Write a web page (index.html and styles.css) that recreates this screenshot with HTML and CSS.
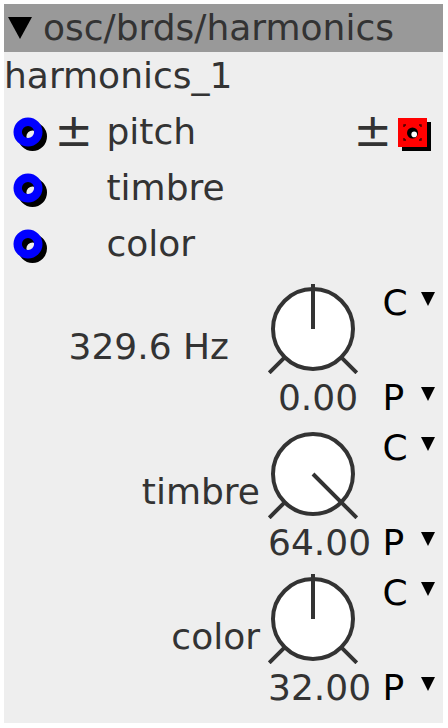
FILE: index.html
```html
<!DOCTYPE html>
<html lang="en">
<head>
    <meta charset="UTF-8">
    <meta name="viewport" content="width=device-width, initial-scale=1.0">
    <title>osc/brds/harmonics</title>
    <link rel="stylesheet" href="styles.css">
</head>
<body>
    <div class="panel">
        <div class="head"><span class="tri"></span>osc/brds/harmonics</div>
        <div class="inst">harmonics_1</div>

        <div class="port-row">
            <svg class="port" width="36" height="40" viewBox="0 0 36 40">
                <circle cx="20.5" cy="24.5" r="10.3" fill="none" stroke="#000" stroke-width="8.4"/>
                <circle cx="16" cy="20" r="10.3" fill="none" stroke="#00f" stroke-width="8.4"/>
            </svg>
            <span class="pm">±</span>
            <span class="name">pitch</span>
            <span class="pm pm-right">±</span>
            <svg class="jack" width="34" height="34" viewBox="0 0 34 34">
                <rect x="4" y="4" width="29" height="29" fill="#000"/>
                <rect x="0" y="0" width="29" height="29" fill="#f00"/>
                <path d="M6 9V7h2M21 7h2v2M6 20v2h2M21 22h2v-2" fill="none" stroke="#400" stroke-width="1.4"/>
                <circle cx="14.5" cy="15" r="5.5" fill="#000"/>
                <circle cx="16.2" cy="16.4" r="2.8" fill="#fff"/>
            </svg>
        </div>
        <div class="port-row">
            <svg class="port" width="36" height="40" viewBox="0 0 36 40">
                <circle cx="20.5" cy="24.5" r="10.3" fill="none" stroke="#000" stroke-width="8.4"/>
                <circle cx="16" cy="20" r="10.3" fill="none" stroke="#00f" stroke-width="8.4"/>
            </svg>
            <span class="pm"></span>
            <span class="name">timbre</span>
        </div>
        <div class="port-row">
            <svg class="port" width="36" height="40" viewBox="0 0 36 40">
                <circle cx="20.5" cy="24.5" r="10.3" fill="none" stroke="#000" stroke-width="8.4"/>
                <circle cx="16" cy="20" r="10.3" fill="none" stroke="#00f" stroke-width="8.4"/>
            </svg>
            <span class="pm"></span>
            <span class="name">color</span>
        </div>

        <div class="knobs">
            <div class="knob-row">
                <div class="knob-label hz">329.6 Hz</div>
                <div class="knob-col">
                    <svg class="knob" width="90" height="90" viewBox="0 0 90 90">
                        <circle cx="45" cy="45" r="40" fill="#fff" stroke="#333" stroke-width="4"/>
                        <path d="M16.7 73.3L1.2 88.8M73.3 73.3L88.8 88.8M45 45V0" stroke="#333" stroke-width="4"/>
                    </svg>
                    <div class="knob-val">0.00</div>
                </div>
                <div class="cp">
                    <div class="cp-item c"><span class="letter">C</span><span class="dd"></span></div>
                    <div class="cp-item p"><span class="letter">P</span><span class="dd"></span></div>
                </div>
            </div>

            <div class="knob-row">
                <div class="knob-label">timbre</div>
                <div class="knob-col">
                    <svg class="knob" width="90" height="90" viewBox="0 0 90 90">
                        <circle cx="45" cy="45" r="40" fill="#fff" stroke="#333" stroke-width="4"/>
                        <path d="M16.7 73.3L1.2 88.8M73.3 73.3L88.8 88.8M45 45L76.8 76.8" stroke="#333" stroke-width="4"/>
                    </svg>
                    <div class="knob-val">64.00</div>
                </div>
                <div class="cp">
                    <div class="cp-item c"><span class="letter">C</span><span class="dd"></span></div>
                    <div class="cp-item p"><span class="letter">P</span><span class="dd"></span></div>
                </div>
            </div>

            <div class="knob-row">
                <div class="knob-label">color</div>
                <div class="knob-col">
                    <svg class="knob" width="90" height="90" viewBox="0 0 90 90">
                        <circle cx="45" cy="45" r="40" fill="#fff" stroke="#333" stroke-width="4"/>
                        <path d="M16.7 73.3L1.2 88.8M73.3 73.3L88.8 88.8M45 45V0" stroke="#333" stroke-width="4"/>
                    </svg>
                    <div class="knob-val">32.00</div>
                </div>
                <div class="cp">
                    <div class="cp-item c"><span class="letter">C</span><span class="dd"></span></div>
                    <div class="cp-item p"><span class="letter">P</span><span class="dd"></span></div>
                </div>
            </div>
        </div>
    </div>
</body>
</html>
```

FILE: styles.css
```css
body {
    margin: 4px;
    background: #fff;
    font-family: "DejaVu Sans", sans-serif;
    font-size: 36px;
    color: #333;
}
.panel {
    width: 439px;
    height: 719px;
    background: #eee;
}
.head {
    display: flex;
    align-items: center;
    height: 48px;
    line-height: 48px;
    background: #999;
}
.tri {
    width: 0;
    height: 0;
    border-left: 12px solid transparent;
    border-right: 12px solid transparent;
    border-top: 22px solid #000;
    margin-left: 4px;
    margin-right: 11px;
}
.inst {
    line-height: 48px;
    padding-bottom: 4px;
}
.port-row {
    display: flex;
    align-items: center;
    height: 56px;
    line-height: 56px;
}
.port {
    display: block;
    margin-left: 7.5px;
    flex: none;
}
.pm {
    display: inline-block;
    width: 52px;
    margin-left: 7px;
    font-size: 46px;
    line-height: 46px;
    margin-top: -4px;
}
.pm-right {
    width: auto;
    margin-left: 0;
    margin-right: 6px;
}
.name {
    flex: 1;
}
.jack {
    display: block;
    align-self: flex-start;
    margin-top: 14px;
    margin-right: 11px;
}
.knobs {
    margin-top: 12px;
}
.knob-row {
    display: flex;
    height: 138px;
    margin-bottom: 7px;
}
.knob-label {
    flex: 1;
    text-align: right;
    padding-right: 8px;
    padding-top: 42px;
    line-height: 42px;
}
.knob-label.hz {
    padding-right: 39px;
}
.knob-col {
    width: 100px;
}
.knob {
    display: block;
}
.knob-val {
    text-align: center;
    line-height: 48px;
}
.cp {
    display: flex;
    flex-direction: column;
    justify-content: space-between;
    padding-left: 14.5px;
    padding-right: 8px;
    color: #000;
}
.cp-item {
    display: flex;
}
.letter {
    width: 38.5px;
}
.c {
    line-height: 38px;
}
.p {
    line-height: 48px;
}
.dd {
    width: 0;
    height: 0;
    border-left: 7.5px solid transparent;
    border-right: 7.5px solid transparent;
    border-top: 14px solid #000;
}
.c .dd {
    margin-top: 8px;
}
.p .dd {
    margin-top: 12.5px;
}
```
